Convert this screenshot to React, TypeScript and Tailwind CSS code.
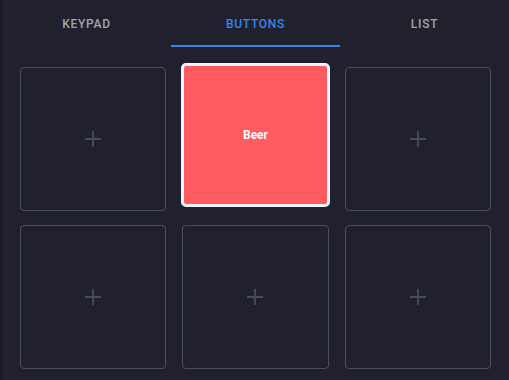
import React from "react";

const tabs = ["Keypad", "Buttons", "List"];

function Plus() {
  return (
    <svg width="18" height="18" viewBox="0 0 18 18" className="text-[#4a4a5e]">
      <path d="M9 1v16M1 9h16" stroke="currentColor" strokeWidth="1.8" fill="none" />
    </svg>
  );
}

export default function App() {
  const tiles = [null, "Beer", null, null, null, null];
  return (
    <div
      className="flex h-[380px] w-[509px] overflow-hidden bg-[#1a1a23]"
      style={{ fontFamily: "Roboto, 'Noto Sans', sans-serif" }}
    >
      <div className="ml-[2px] flex-1 bg-[#21212d]">
        {/* Tabs */}
        <div className="grid h-[47px] grid-cols-3">
          {tabs.map((t, i) => (
            <div
              key={t}
              className={
                "flex items-center justify-center border-b-2 pt-[3px] text-[12px] font-medium uppercase tracking-[0.06em] " +
                (i === 1
                  ? "border-[#3584f0] text-[#3584f0]"
                  : "border-transparent text-[#a3a3af]")
              }
            >
              {t}
            </div>
          ))}
        </div>

        {/* Button grid */}
        <div className="grid grid-cols-3 gap-x-4 gap-y-[14px] px-[18px] pt-5">
          {tiles.map((label, i) =>
            label ? (
              <div
                key={i}
                className="-mx-px flex h-[144px] -translate-y-1 items-center justify-center rounded-[5px] border-[3.5px] border-[#f4f4fb] bg-[#ff5c62] text-[12px] font-bold text-white"
              >
                {label}
              </div>
            ) : (
              <div
                key={i}
                className="flex h-[144px] items-center justify-center rounded border border-[#4e4e62]"
              >
                <Plus />
              </div>
            )
          )}
        </div>
      </div>
    </div>
  );
}
